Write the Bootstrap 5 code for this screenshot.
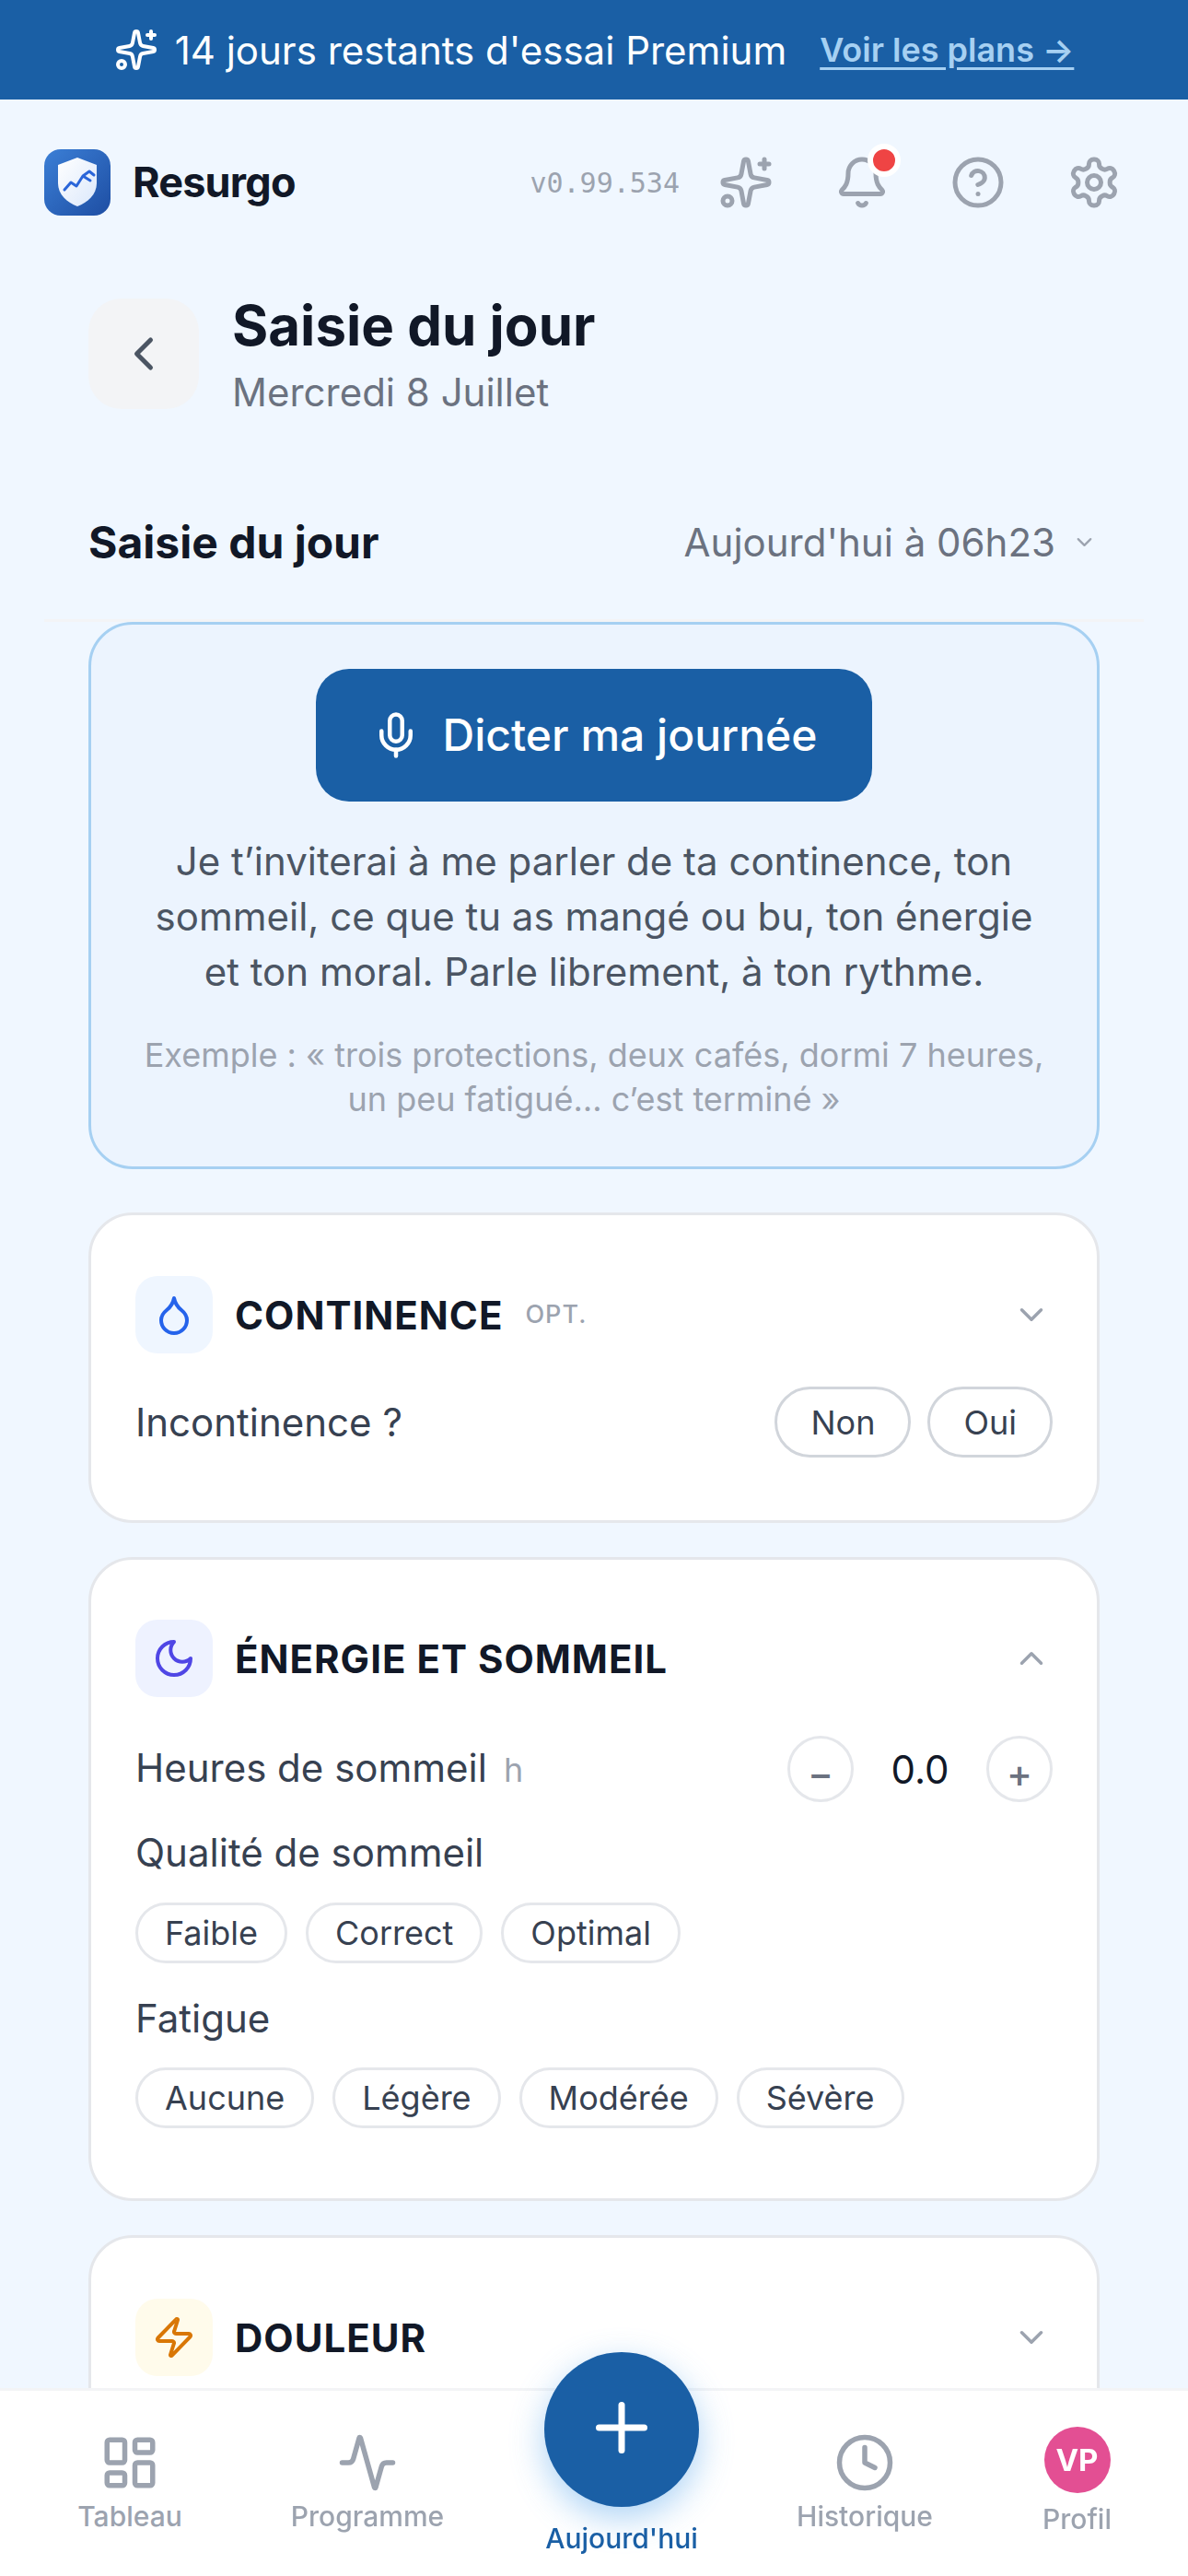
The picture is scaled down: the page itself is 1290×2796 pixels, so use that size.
<!DOCTYPE html>
<html lang="fr">
<head>
    <meta charset="UTF-8">
    <meta name="viewport" content="width=device-width, initial-scale=1.0">
    <title>Resurgo - Saisie du jour</title>
    <link href="https://cdn.jsdelivr.net/npm/bootstrap@5.3.0/dist/css/bootstrap.min.css" rel="stylesheet">
    <style>
        html, body { height: 100%; overflow: hidden; }
        body {
            background-color: #f0f7ff;
            font-family: Inter, "Liberation Sans", sans-serif;
            color: #111827;
        }
        svg.ic { fill: none; stroke: currentColor; stroke-linecap: round; stroke-linejoin: round; flex: none; display: block; }

        .rs-banner { height: 108px; background: #1a5fa5; color: #fff; font-size: 42px; gap: 18px; }
        .rs-banner a { color: #a6d0f2; font-size: 36px; font-weight: 600; margin-left: 18px; text-underline-offset: 6px; }

        .rs-head { height: 180px; padding: 0 72px 0 48px; }
        .rs-logo { width: 72px; height: 72px; }
        .rs-brand { font-size: 45px; font-weight: 700; letter-spacing: -.8px; margin-left: 24px; }
        .rs-version { font-family: "DejaVu Sans Mono", monospace; font-size: 30px; color: #9ca3af; margin-right: 42px; }
        .rs-tools { gap: 66px; color: #9ca3af; }
        .rs-bell { position: relative; }
        .rs-dot { position: absolute; top: -12px; left: 36px; width: 36px; height: 36px; border-radius: 50%; background: #ef4444; border: 6px solid #fff; }

        .rs-title-row { padding: 36px 96px 0; gap: 36px; }
        .rs-back { width: 120px; height: 120px; border-radius: 36px; background: #f3f4f6; color: #4b5563; }
        .rs-title { font-size: 60px; line-height: 60px; font-weight: 700; margin: -1px 0 13px; }
        .rs-sub { font-size: 42px; line-height: 60px; color: #6b7280; }

        .rs-section { margin: 97px 48px 0; padding: 0 48px 48px; border-bottom: 3px solid #f3f4f6; height: 122px; }
        .rs-section-title { font-size: 48px; line-height: 72px; font-weight: 700; }
        .rs-when { font-size: 42px; color: #6b7280; gap: 18px; }
        .rs-when svg { color: #9ca3af; margin-right: 3px; }

        .rs-list { padding: 0 96px; }
        .rs-dictate { border: 3px solid #a6d0f2; border-radius: 48px; background: #ecf4fe; padding: 48px; text-align: center; }
        .btn.rs-mic { height: 144px; padding: 0 60px; border-radius: 36px; background: #1a5fa5; color: #fff; font-size: 48px; font-weight: 500; gap: 24px; border: 0; }
        .rs-hint { font-size: 42px; line-height: 60px; color: #4b5563; margin: 35px 0 0; }
        .rs-example { font-size: 36px; line-height: 48px; color: #9ca3af; margin: 36px 0 1px; }

        .card.rs-card { border: 3px solid #e5e7eb; border-radius: 48px; margin-top: 37px; background: #fff; }
        .rs-card .card-body { padding: 66px 48px; }
        .rs-first { margin-top: 47px !important; }
        .rs-tile { width: 84px; height: 84px; border-radius: 24px; }
        .rs-name { font-size: 42px; font-weight: 700; letter-spacing: 1px; margin-left: 24px; }
        .rs-opt { font-size: 27px; font-weight: 500; color: #9ca3af; letter-spacing: 1px; margin-left: 24px; }
        .rs-chev { color: #9ca3af; margin-left: auto; margin-right: 2px; }
        .rs-label { font-size: 42px; line-height: 60px; color: #374151; }
        .rs-unit { font-size: 36px; color: #9ca3af; margin-left: 18px; }
        .btn.rs-choice { height: 77px; padding: 0 36px; border: 3px solid #d1d5db; border-radius: 50rem; background: #fff; color: #374151; font-size: 36px; }
        .btn.rs-chip { height: 66px; padding: 0 29px; border: 3px solid #e5e7eb; border-radius: 50rem; background: #fff; color: #374151; font-size: 36px; }
        .btn.rs-step { width: 72px; height: 72px; padding: 6px 0 0; border: 3px solid #e5e7eb; border-radius: 50%; background: #fff; color: #6b7280; font-size: 42px; font-weight: 500; }
        .rs-value { width: 72px; margin: 0 36px; text-align: center; font-size: 42px; color: #111827; }

        .rs-nav {
            position: fixed; left: 0; right: 0; bottom: 0; height: 204px;
            background: #fff; border-top: 3px solid #f3f4f6;
            display: grid; grid-template-columns: 282px 234px 318px 210px 246px;
            color: #9ca3af; font-size: 30px; font-weight: 500; text-align: center;
        }
        .rs-tab { padding-top: 45px; line-height: 42px; }
        .rs-tab svg { margin: 0 auto 4px; }
        .rs-fab {
            width: 168px; height: 168px; border-radius: 50%; margin: -87px auto 13px;
            background: #1a5fa5; color: #fff;
            box-shadow: 0 12px 36px rgba(74, 158, 232, .45);
        }
        .rs-avatar { width: 72px; height: 72px; border-radius: 50%; background: #e34f93; color: #fff; font-size: 33px; font-weight: 700; margin: -6px auto 7px; }
    </style>
</head>
<body>
    <!-- Premium banner -->
    <div class="rs-banner d-flex align-items-center justify-content-center">
        <svg class="ic" width="48" height="48" viewBox="0 0 24 24" stroke-width="2"><path d="M11.017 2.814a1 1 0 0 1 1.966 0l1.051 5.558a2 2 0 0 0 1.594 1.594l5.558 1.051a1 1 0 0 1 0 1.966l-5.558 1.051a2 2 0 0 0-1.594 1.594l-1.051 5.558a1 1 0 0 1-1.966 0l-1.051-5.558a2 2 0 0 0-1.594-1.594l-5.558-1.051a1 1 0 0 1 0-1.966l5.558-1.051a2 2 0 0 0 1.594-1.594z"/><path d="M20 2v4"/><path d="M22 4h-4"/><circle cx="4" cy="20" r="2"/></svg>
        <span>14 jours restants d'essai Premium</span>
        <a href="#">Voir les plans →</a>
    </div>

    <!-- App header -->
    <header class="rs-head d-flex align-items-center">
        <svg class="rs-logo" viewBox="0 0 72 72">
            <defs>
                <linearGradient id="tile" x1="0" y1="0" x2="1" y2="1"><stop offset="0" stop-color="#3b7fd6"/><stop offset="1" stop-color="#1e4ea3"/></linearGradient>
                <linearGradient id="shield" x1="0" y1="0" x2="1" y2="1"><stop offset="0" stop-color="#ffffff"/><stop offset="1" stop-color="#dbe8fb"/></linearGradient>
            </defs>
            <rect width="72" height="72" rx="18" fill="url(#tile)"/>
            <path d="M36 9 57 17V37C57 49 47 58 36 62 25 58 15 49 15 37V17Z" fill="url(#shield)"/>
            <path d="M22 44 29 36 35 40 42 29 50 34M42 29 49 24 54 28" fill="none" stroke="#2b66d9" stroke-width="3" stroke-linecap="round" stroke-linejoin="round"/>
        </svg>
        <span class="rs-brand">Resurgo</span>
        <span class="rs-version ms-auto">v0.99.534</span>
        <div class="rs-tools d-flex align-items-center">
            <svg class="ic" width="60" height="60" viewBox="0 0 24 24" stroke-width="2"><path d="M11.017 2.814a1 1 0 0 1 1.966 0l1.051 5.558a2 2 0 0 0 1.594 1.594l5.558 1.051a1 1 0 0 1 0 1.966l-5.558 1.051a2 2 0 0 0-1.594 1.594l-1.051 5.558a1 1 0 0 1-1.966 0l-1.051-5.558a2 2 0 0 0-1.594-1.594l-5.558-1.051a1 1 0 0 1 0-1.966l5.558-1.051a2 2 0 0 0 1.594-1.594z"/><path d="M20 2v4"/><path d="M22 4h-4"/><circle cx="4" cy="20" r="2"/></svg>
            <div class="rs-bell">
                <svg class="ic" width="60" height="60" viewBox="0 0 24 24" stroke-width="2"><path d="M10.268 21a2 2 0 0 0 3.464 0"/><path d="M3.262 15.326A1 1 0 0 0 4 17h16a1 1 0 0 0 .74-1.673C19.41 13.956 18 12.499 18 8A6 6 0 0 0 6 8c0 4.499-1.411 5.956-2.738 7.326"/></svg>
                <span class="rs-dot"></span>
            </div>
            <svg class="ic" width="60" height="60" viewBox="0 0 24 24" stroke-width="2"><circle cx="12" cy="12" r="10"/><path d="M9.09 9a3 3 0 0 1 5.83 1c0 2-3 3-3 3"/><path d="M12 17h.01"/></svg>
            <svg class="ic" width="60" height="60" viewBox="0 0 24 24" stroke-width="2"><path d="M12.22 2h-.44a2 2 0 0 0-2 2v.18a2 2 0 0 1-1 1.73l-.43.25a2 2 0 0 1-2 0l-.15-.08a2 2 0 0 0-2.73.73l-.22.38a2 2 0 0 0 .73 2.73l.15.1a2 2 0 0 1 1 1.72v.51a2 2 0 0 1-1 1.74l-.15.09a2 2 0 0 0-.73 2.73l.22.38a2 2 0 0 0 2.73.73l.15-.08a2 2 0 0 1 2 0l.43.25a2 2 0 0 1 1 1.73V20a2 2 0 0 0 2 2h.44a2 2 0 0 0 2-2v-.18a2 2 0 0 1 1-1.73l.43-.25a2 2 0 0 1 2 0l.15.08a2 2 0 0 0 2.73-.73l.22-.39a2 2 0 0 0-.73-2.73l-.15-.08a2 2 0 0 1-1-1.74v-.5a2 2 0 0 1 1-1.74l.15-.09a2 2 0 0 0 .73-2.73l-.22-.38a2 2 0 0 0-2.73-.73l-.15.08a2 2 0 0 1-2 0l-.43-.25a2 2 0 0 1-1-1.73V4a2 2 0 0 0-2-2z"/><circle cx="12" cy="12" r="3"/></svg>
        </div>
    </header>

    <!-- Page title -->
    <div class="rs-title-row d-flex align-items-start">
        <div class="rs-back d-flex align-items-center justify-content-center">
            <svg class="ic" width="60" height="60" viewBox="0 0 24 24" stroke-width="2"><path d="m15 18-6-6 6-6"/></svg>
        </div>
        <div>
            <h1 class="rs-title">Saisie du jour</h1>
            <div class="rs-sub">Mercredi 8 Juillet</div>
        </div>
    </div>

    <div class="rs-section d-flex justify-content-between">
        <span class="rs-section-title">Saisie du jour</span>
        <span class="rs-when d-flex align-items-center">Aujourd'hui à 06h23
            <svg class="ic" width="27" height="27" viewBox="0 0 24 24" stroke-width="2"><path d="m6 9 6 6 6-6"/></svg>
        </span>
    </div>

    <main class="rs-list">
        <!-- Voice entry -->
        <div class="rs-dictate">
            <button type="button" class="btn rs-mic d-inline-flex align-items-center">
                <svg class="ic" width="54" height="54" viewBox="0 0 24 24" stroke-width="2"><path d="M12 2a3 3 0 0 0-3 3v7a3 3 0 0 0 6 0V5a3 3 0 0 0-3-3Z"/><path d="M19 10v2a7 7 0 0 1-14 0v-2"/><path d="M12 19v3"/></svg>
                Dicter ma journée
            </button>
            <p class="rs-hint">Je t’inviterai à me parler de ta continence, ton<br>sommeil, ce que tu as mangé ou bu, ton énergie<br>et ton moral. Parle librement, à ton rythme.</p>
            <p class="rs-example">Exemple : « trois protections, deux cafés, dormi 7 heures,<br>un peu fatigué… c’est terminé »</p>
        </div>

        <!-- Continence -->
        <div class="card rs-card rs-first">
            <div class="card-body" style="padding-bottom:68px">
                <div class="d-flex align-items-center">
                    <div class="rs-tile d-flex align-items-center justify-content-center" style="background:#eff6ff;color:#2563eb">
                        <svg class="ic" width="48" height="48" viewBox="0 0 24 24" stroke-width="2"><path d="M12 22a7 7 0 0 0 7-7c0-2-1-3.9-3-5.5s-3.5-4-4-6.5c-.5 2.5-2 4.9-4 6.5C6 11.1 5 13 5 15a7 7 0 0 0 7 7z"/></svg>
                    </div>
                    <span class="rs-name">CONTINENCE</span>
                    <span class="rs-opt">OPT.</span>
                    <svg class="ic rs-chev" width="42" height="42" viewBox="0 0 24 24" stroke-width="2"><path d="m6 9 6 6 6-6"/></svg>
                </div>
                <div class="d-flex align-items-center justify-content-between" style="margin-top:36px">
                    <span class="rs-label">Incontinence ?</span>
                    <div class="d-flex" style="gap:18px">
                        <button type="button" class="btn rs-choice">Non</button>
                        <button type="button" class="btn rs-choice">Oui</button>
                    </div>
                </div>
            </div>
        </div>

        <!-- Energie et sommeil -->
        <div class="card rs-card">
            <div class="card-body" style="padding-top:65px;padding-bottom:76px">
                <div class="d-flex align-items-center">
                    <div class="rs-tile d-flex align-items-center justify-content-center" style="background:#eef2ff;color:#4f46e5">
                        <svg class="ic" width="48" height="48" viewBox="0 0 24 24" stroke-width="2"><path d="M12 3a6 6 0 0 0 9 9 9 9 0 1 1-9-9Z"/></svg>
                    </div>
                    <span class="rs-name">ÉNERGIE ET SOMMEIL</span>
                    <svg class="ic rs-chev" width="42" height="42" viewBox="0 0 24 24" stroke-width="2"><path d="m18 15-6-6-6 6"/></svg>
                </div>
                <div class="d-flex align-items-center justify-content-between" style="margin-top:42px">
                    <span class="rs-label">Heures de sommeil<span class="rs-unit">h</span></span>
                    <div class="d-flex align-items-center">
                        <button type="button" class="btn rs-step">−</button>
                        <span class="rs-value">0.0</span>
                        <button type="button" class="btn rs-step">+</button>
                    </div>
                </div>
                <div class="rs-label" style="margin-top:25px">Qualité de sommeil</div>
                <div class="d-flex" style="gap:20px;margin-top:24px">
                    <button type="button" class="btn rs-chip">Faible</button>
                    <button type="button" class="btn rs-chip">Correct</button>
                    <button type="button" class="btn rs-chip">Optimal</button>
                </div>
                <div class="rs-label" style="margin-top:30px">Fatigue</div>
                <div class="d-flex" style="gap:20px;margin-top:23px">
                    <button type="button" class="btn rs-chip">Aucune</button>
                    <button type="button" class="btn rs-chip">Légère</button>
                    <button type="button" class="btn rs-chip">Modérée</button>
                    <button type="button" class="btn rs-chip">Sévère</button>
                </div>
            </div>
        </div>

        <!-- Douleur -->
        <div class="card rs-card">
            <div class="card-body">
                <div class="d-flex align-items-center">
                    <div class="rs-tile d-flex align-items-center justify-content-center" style="background:#fffbeb;color:#d97706">
                        <svg class="ic" width="48" height="48" viewBox="0 0 24 24" stroke-width="2"><path d="M4 14a1 1 0 0 1-.78-1.63l9.9-10.2a.5.5 0 0 1 .86.46l-1.92 6.02A1 1 0 0 0 13 10h7a1 1 0 0 1 .78 1.63l-9.9 10.2a.5.5 0 0 1-.86-.46l1.92-6.02A1 1 0 0 0 11 14z"/></svg>
                    </div>
                    <span class="rs-name">DOULEUR</span>
                    <svg class="ic rs-chev" width="42" height="42" viewBox="0 0 24 24" stroke-width="2"><path d="m6 9 6 6 6-6"/></svg>
                </div>
            </div>
        </div>
    </main>

    <!-- Bottom tab bar -->
    <nav class="rs-nav">
        <div class="rs-tab">
            <svg class="ic" width="66" height="66" viewBox="0 0 24 24" stroke-width="2"><rect width="7" height="9" x="3" y="3" rx="1"/><rect width="7" height="5" x="14" y="3" rx="1"/><rect width="7" height="9" x="14" y="12" rx="1"/><rect width="7" height="5" x="3" y="16" rx="1"/></svg>
            Tableau
        </div>
        <div class="rs-tab">
            <svg class="ic" width="66" height="66" viewBox="0 0 24 24" stroke-width="2"><path d="M22 12h-2.48a2 2 0 0 0-1.93 1.46l-2.35 8.36a.25.25 0 0 1-.48 0L9.24 2.18a.25.25 0 0 0-.48 0l-2.35 8.36A2 2 0 0 1 4.49 12H2"/></svg>
            Programme
        </div>
        <div class="rs-tab" style="color:#1a5fa5">
            <div class="rs-fab d-flex align-items-center justify-content-center">
                <svg class="ic" width="84" height="84" viewBox="0 0 24 24" stroke-width="2"><path d="M5 12h14"/><path d="M12 5v14"/></svg>
            </div>
            Aujourd'hui
        </div>
        <div class="rs-tab">
            <svg class="ic" width="66" height="66" viewBox="0 0 24 24" stroke-width="2"><circle cx="12" cy="12" r="10"/><path d="M12 6v6l4 2"/></svg>
            Historique
        </div>
        <div class="rs-tab" style="padding-left:5px">
            <div class="rs-avatar d-flex align-items-center justify-content-center">VP</div>
            Profil
        </div>
    </nav>

    <script src="https://cdn.jsdelivr.net/npm/bootstrap@5.3.0/dist/js/bootstrap.bundle.min.js"></script>
</body>
</html>
